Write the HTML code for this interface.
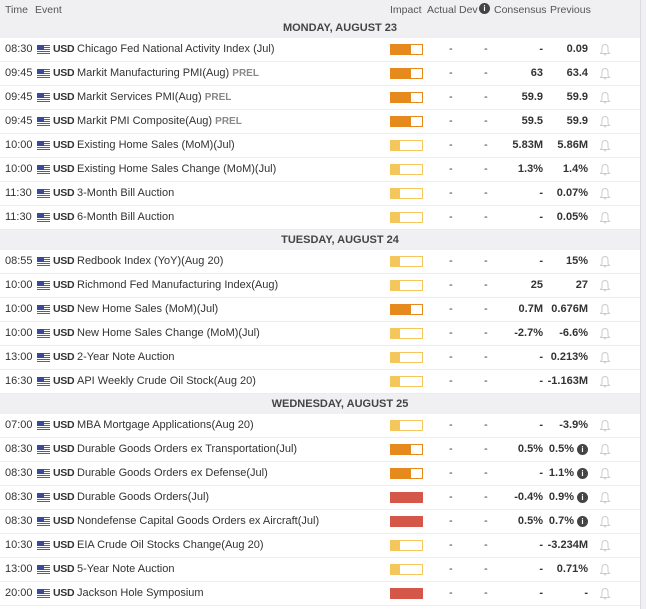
<!DOCTYPE html><html><head><style>
body{margin:0;width:646px;height:609px;background:#f0f0f3;font-family:"Liberation Sans",Arial,sans-serif;font-size:11px;color:#333;overflow:hidden;position:relative}
.wrap{position:absolute;left:0;top:0;width:640px;height:609px;background:#fff;border-right:1px solid #dcdce0}
.hd{position:absolute;top:0;left:0;width:640px;height:18px;background:#f0f0f3;color:#555;font-size:10.5px}
.hd span{position:absolute;top:4px}
.day{position:absolute;left:0;width:640px;height:20px;background:#f0f0f3;font-weight:bold;font-size:11px;color:#444;text-align:center;line-height:20px;padding-left:40px;box-sizing:border-box}
.r{position:absolute;left:0;width:640px;height:23px;border-bottom:1px solid #ececef;line-height:23px}
.r span{position:absolute}
.t{left:5px}
.f{left:37px;top:7px;width:13px;height:9px;background:repeating-linear-gradient(#c33 0 1px,#fff 1px 2px)}
.f:before{content:"";position:absolute;left:0;top:0;width:7px;height:5px;background:#3a4a9a}
.u{left:53px;font-weight:bold;font-size:10.5px;letter-spacing:-0.3px}
.e{left:77px}
.p{color:#888;font-weight:bold;font-size:10px}
.b{left:390px;top:6px;width:31px;height:9px;border:1px solid}
.o{border-color:#e68a1e;background:linear-gradient(90deg,#e68a1e 0 20px,#fff 20px)}
.y{border-color:#f5c65c;background:linear-gradient(90deg,#f5c65c 0 9px,#fff 9px)}
.rd{border-color:#d4574a;background:#d4574a}
.a{left:449px}.d{left:484px}
.c{right:97px;text-align:right;font-weight:bold}
.v{right:52px;text-align:right;font-weight:bold}
.v2{right:66px}
.i{right:52px;top:6px;width:11px;height:11px;border-radius:50%;background:#444;color:#fff;font-size:8px;line-height:11px;text-align:center;font-weight:bold}
.bl{left:599px;top:5px;line-height:0}
</style></head><body><div class="wrap">
<div class="hd"><span style="left:5px">Time</span><span style="left:35px">Event</span><span style="left:390px">Impact</span><span style="left:427px">Actual</span><span style="left:459px">Dev</span><span style="left:479px;top:3px;width:11px;height:11px;border-radius:50%;background:#444;color:#fff;font-size:8px;text-align:center;line-height:11px;font-weight:bold">i</span><span style="left:494px">Consensus</span><span style="left:550px">Previous</span></div>
<div class="day" style="top:18px">MONDAY, AUGUST 23</div>
<div class="day" style="top:230px">TUESDAY, AUGUST 24</div>
<div class="day" style="top:394px">WEDNESDAY, AUGUST 25</div>
<div id="rows"></div>
</div>
<script>
var R=[
[38,"08:30","Chicago Fed National Activity Index (Jul)","","o","-","0.09",0],
[62,"09:45","Markit Manufacturing PMI(Aug)","PREL","o","63","63.4",0],
[86,"09:45","Markit Services PMI(Aug)","PREL","o","59.9","59.9",0],
[110,"09:45","Markit PMI Composite(Aug)","PREL","o","59.5","59.9",0],
[134,"10:00","Existing Home Sales (MoM)(Jul)","","y","5.83M","5.86M",0],
[158,"10:00","Existing Home Sales Change (MoM)(Jul)","","y","1.3%","1.4%",0],
[182,"11:30","3-Month Bill Auction","","y","-","0.07%",0],
[206,"11:30","6-Month Bill Auction","","y","-","0.05%",0],
[250,"08:55","Redbook Index (YoY)(Aug 20)","","y","-","15%",0],
[274,"10:00","Richmond Fed Manufacturing Index(Aug)","","y","25","27",0],
[298,"10:00","New Home Sales (MoM)(Jul)","","o","0.7M","0.676M",0],
[322,"10:00","New Home Sales Change (MoM)(Jul)","","y","-2.7%","-6.6%",0],
[346,"13:00","2-Year Note Auction","","y","-","0.213%",0],
[370,"16:30","API Weekly Crude Oil Stock(Aug 20)","","y","-","-1.163M",0],
[414,"07:00","MBA Mortgage Applications(Aug 20)","","y","-","-3.9%",0],
[438,"08:30","Durable Goods Orders ex Transportation(Jul)","","o","0.5%","0.5%",1],
[462,"08:30","Durable Goods Orders ex Defense(Jul)","","o","-","1.1%",1],
[486,"08:30","Durable Goods Orders(Jul)","","rd","-0.4%","0.9%",1],
[510,"08:30","Nondefense Capital Goods Orders ex Aircraft(Jul)","","rd","0.5%","0.7%",1],
[534,"10:30","EIA Crude Oil Stocks Change(Aug 20)","","y","-","-3.234M",0],
[558,"13:00","5-Year Note Auction","","y","-","0.71%",0],
[582,"20:00","Jackson Hole Symposium","","rd","-","-",0]];
var bell='<svg width="12" height="13" viewBox="0 0 12 13"><path d="M6 1.5C3.8 1.5 3 3.3 3 5.2V8.5L1.5 10.5H10.5L9 8.5V5.2C9 3.3 8.2 1.5 6 1.5Z M4.8 11.2Q6 12.6 7.2 11.2" fill="none" stroke="#ccc" stroke-width="1"/></svg>';
var h="";R.forEach(function(r){h+='<div class="r" style="top:'+r[0]+'px"><span class="t">'+r[1]+'</span><span class="f"></span><span class="u">USD</span><span class="e">'+r[2]+(r[3]?' <span class="p" style="position:static">'+r[3]+'</span>':'')+'</span><span class="b '+r[4]+'"></span><span class="a">-</span><span class="d">-</span><span class="c">'+r[5]+'</span><span class="v'+(r[7]?' v2':'')+'">'+r[6]+'</span>'+(r[7]?'<span class="i">i</span>':'')+'<span class="bl">'+bell+'</span></div>'});
document.getElementById("rows").innerHTML=h;
</script></body></html>
